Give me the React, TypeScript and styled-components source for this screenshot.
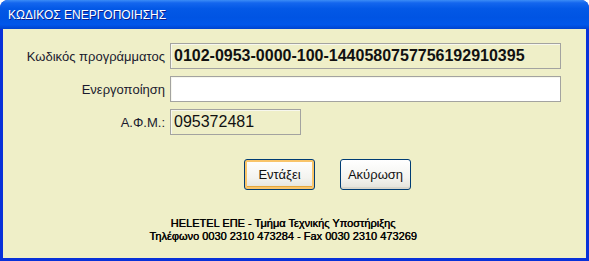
import React from 'react';
import styled, { createGlobalStyle } from 'styled-components';

const GlobalStyle = createGlobalStyle`
  html, body {
    margin: 0;
    padding: 0;
    background: #ffffff;
  }
  body {
    font-family: "Liberation Sans", Arial, sans-serif;
  }
`;

const Window = styled.div`
  width: 589px;
  height: 261px;
  box-sizing: border-box;
  display: flex;
  flex-direction: column;
  background: #0831d9;
  border-radius: 8px 8px 0 0;
  overflow: hidden;
`;

const TitleBar = styled.div`
  height: 29px;
  flex-shrink: 0;
  display: flex;
  align-items: center;
  padding-left: 8px;
  background: linear-gradient(
    to bottom,
    #3b8cf6 0%,
    #1466ee 10%,
    #0358e6 30%,
    #0054e3 60%,
    #0157ea 85%,
    #0043cf 100%
  );
`;

const Title = styled.span`
  color: #ffffff;
  font-size: 12px;
  text-shadow: 1px 1px 0 #0a1e8c;
`;

const Body = styled.div`
  flex: 1;
  margin: 0 3px 3px 3px;
  background: #efefc8;
  display: flex;
  flex-direction: column;
  padding-top: 14px;
`;

const Form = styled.div`
  display: grid;
  grid-template-columns: 162px auto;
  column-gap: 5px;
  row-gap: 7px;
  align-items: center;
`;

const Label = styled.label`
  text-align: right;
  font-size: 13px;
  color: #1a1a2e;
`;

const Field = styled.div<{ $width: number; $white?: boolean; $bold?: boolean }>`
  width: ${({ $width }) => $width}px;
  height: 26px;
  box-sizing: border-box;
  border: 1px solid #a3a3a0;
  box-shadow: inset 1px 1px 0 #f7f7ee;
  background: ${({ $white }) => ($white ? '#ffffff' : '#efefc8')};
  display: flex;
  align-items: center;
  padding-left: 3px;
  font-size: 16px;
  font-weight: ${({ $bold }) => ($bold ? 700 : 400)};
  color: #111111;
  white-space: nowrap;
`;

const Buttons = styled.div`
  display: flex;
  gap: 25px;
  margin-top: 24px;
  padding-left: 241px;
`;

const Button = styled.button<{ $focused?: boolean }>`
  width: 71px;
  height: 31px;
  box-sizing: border-box;
  border: 1px solid #003c74;
  border-radius: 3px;
  background: linear-gradient(to bottom, #ffffff 0%, #f4f4f0 60%, #e3e2da 100%);
  box-shadow: ${({ $focused }) =>
    $focused ? 'inset 0 0 0 2px #f9c56a, inset 0 -1px 0 2px #e6a73c' : 'inset 0 -2px 0 #d8d6cc'};
  font-family: "Liberation Sans", Arial, sans-serif;
  font-size: 13px;
  color: #111111;
  padding: 0;
`;

const Footer = styled.div`
  margin-top: 27px;
  padding-right: 23px;
  text-align: center;
  font-size: 11px;
  line-height: 13px;
  color: #000000;
  text-shadow: 0.4px 0 0 #000000;
`;

export default function App() {
  return (
    <>
      <GlobalStyle />
      <Window>
        <TitleBar>
          <Title>ΚΩΔΙΚΟΣ ΕΝΕΡΓΟΠΟΙΗΣΗΣ</Title>
        </TitleBar>
        <Body>
          <Form>
            <Label>Κωδικός προγράμματος</Label>
            <Field $width={391} $bold>
              0102-0953-0000-100-1440580757756192910395
            </Field>
            <Label>Ενεργοποίηση</Label>
            <Field $width={391} $white />
            <Label>Α.Φ.Μ.:</Label>
            <Field $width={131}>095372481</Field>
          </Form>
          <Buttons>
            <Button $focused>Εντάξει</Button>
            <Button>Ακύρωση</Button>
          </Buttons>
          <Footer>
            HELETEL ΕΠΕ - Τμήμα Τεχνικής Υποστήριξης
            <br />
            Τηλέφωνο 0030 2310 473284 - Fax 0030 2310 473269
          </Footer>
        </Body>
      </Window>
    </>
  );
}
